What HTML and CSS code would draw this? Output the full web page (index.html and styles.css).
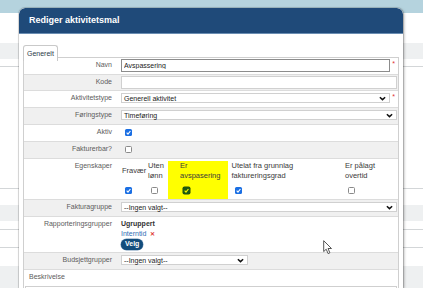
FILE: index.html
```html
<!DOCTYPE html>
<html lang="no">
<head>
    <meta charset="UTF-8">
    <meta name="viewport" content="width=device-width, initial-scale=1.0">
    <title>Rediger aktivitetsmal</title>
    <link rel="stylesheet" href="styles.css">
</head>
<body>

    <!-- page behind the modal -->
    <div class="page">
        <div class="topbar"></div>
        <div class="bg-row h30"></div>
        <div class="bg-row gray h16"></div>
        <div class="bg-row line h8"></div>
        <div class="bg-row line h122"></div>
        <div class="bg-row h16"></div>
        <div class="bg-row gray h16"></div>
        <div class="bg-row line h9"></div>
        <div class="bg-row line h18"></div>
        <div class="bg-row h18"></div>
        <div class="bg-row gray h22"></div>
    </div>

    <div class="modal">
        <div class="modal-title">Rediger aktivitetsmal</div>
        <div class="modal-body">
            <div class="tabs"><span class="tab">Generelt</span></div>

            <div class="form">
                <div class="row">
                    <label>Navn</label>
                    <div class="field">
                        <input class="text focus" type="text" value="Avspassering">
                        <span class="req">*</span>
                    </div>
                </div>

                <div class="row gray short">
                    <label>Kode</label>
                    <div class="field"><input class="text" type="text" value=""></div>
                </div>

                <div class="row">
                    <label>Aktivitetstype</label>
                    <div class="field">
                        <div class="select grow">
                            <span>Generell aktivitet</span>
                            <svg viewBox="0 0 8 5"><path d="M1 1l3 2.8L7 1"/></svg>
                        </div>
                        <span class="req">*</span>
                    </div>
                </div>

                <div class="row gray">
                    <label>Føringstype</label>
                    <div class="field">
                        <div class="select grow">
                            <span>Timeføring</span>
                            <svg viewBox="0 0 8 5"><path d="M1 1l3 2.8L7 1"/></svg>
                        </div>
                    </div>
                </div>

                <div class="row">
                    <label>Aktiv</label>
                    <div class="field">
                        <span class="cb on"><svg viewBox="0 0 8 8"><path d="M1.9 4.2l1.5 1.6 2.8-3.5"/></svg></span>
                    </div>
                </div>

                <div class="row gray">
                    <label>Fakturerbar?</label>
                    <div class="field"><span class="cb"></span></div>
                </div>

                <div class="row tall">
                    <label>Egenskaper</label>
                    <div class="field">
                        <div class="props">
                            <div class="prop-head single">Fravær</div>
                            <div class="prop-head">Uten<br>lønn</div>
                            <div class="prop-head hl">Er<br>avspasering</div>
                            <div class="prop-head">Utelat fra grunnlag<br>faktureringsgrad</div>
                            <div class="prop-head">Er pålagt<br>overtid</div>

                            <div class="prop-cell"><span class="cb on"><svg viewBox="0 0 8 8"><path d="M1.9 4.2l1.5 1.6 2.8-3.5"/></svg></span></div>
                            <div class="prop-cell"><span class="cb"></span></div>
                            <div class="prop-cell hl"><span class="cb on marked"><svg viewBox="0 0 8 8"><path d="M1.9 4.2l1.5 1.6 2.8-3.5"/></svg></span></div>
                            <div class="prop-cell"><span class="cb on"><svg viewBox="0 0 8 8"><path d="M1.9 4.2l1.5 1.6 2.8-3.5"/></svg></span></div>
                            <div class="prop-cell"><span class="cb"></span></div>
                        </div>
                    </div>
                </div>

                <div class="row gray">
                    <label>Fakturagruppe</label>
                    <div class="field">
                        <div class="select grow">
                            <span>--Ingen valgt--</span>
                            <svg viewBox="0 0 8 5"><path d="M1 1l3 2.8L7 1"/></svg>
                        </div>
                    </div>
                </div>

                <div class="row groups">
                    <label>Rapporteringsgrupper</label>
                    <div class="field block">
                        <div class="group-name">Ugruppert</div>
                        <div class="group-item"><a href="#">Interntid</a><span class="remove">✕</span></div>
                        <button class="btn-velg">Velg</button>
                    </div>
                </div>

                <div class="row gray">
                    <label>Budsjettgrupper</label>
                    <div class="field">
                        <div class="select small">
                            <span>--Ingen valgt--</span>
                            <svg viewBox="0 0 8 5"><path d="M1 1l3 2.8L7 1"/></svg>
                        </div>
                    </div>
                </div>

                <div class="row-full">
                    <div class="full-label">Beskrivelse</div>
                    <div class="textarea"></div>
                </div>
            </div>
        </div>
    </div>

    <svg class="cursor" viewBox="0 0 10 15">
        <path d="M0.7 0.7V11.6L3.2 9.2L5.1 13.6L6.9 12.8L5 8.5H8.5Z"/>
    </svg>

</body>
</html>
```

FILE: styles.css
```css
* {
    box-sizing: border-box;
}
body {
    margin: 0;
    width: 423px;
    height: 288px;
    overflow: hidden;
    position: relative;
    font-family: "Liberation Sans", Arial, sans-serif;
    background-color: #fff;
}

/* background page */
.topbar {
    height: 13px;
    background-color: #b5d3de;
}
.bg-row.gray {
    background-color: #eef0f1;
}
.bg-row.line {
    border-bottom: 1px solid #d3d6d8;
}
.h8 { height: 8px; }
.h9 { height: 9px; }
.h16 { height: 16px; }
.h18 { height: 18px; }
.h22 { height: 22px; }
.h30 { height: 30px; }
.h122 { height: 122px; }

/* modal */
.modal {
    position: absolute;
    left: 19px;
    top: 8px;
    width: 384px;
    height: 280px;
    overflow: hidden;
    background-color: #fff;
    border-radius: 6px 6px 0 0;
    box-shadow: 0 0 0 1px rgba(0, 0, 0, 0.12), 1px 1px 3px rgba(0, 0, 0, 0.35);
}
.modal-title {
    height: 26px;
    line-height: 25px;
    padding-left: 10px;
    background-color: #1f4a79;
    border-bottom: 1px solid #6a8db2;
    border-radius: 6px 6px 0 0;
    color: #fff;
    font-size: 9px;
    font-weight: bold;
}
.modal-body {
    padding: 8px 4px 0 4px;
}
.tabs {
    height: 15px;
}
.tab {
    display: inline-block;
    position: relative;
    height: 16px;
    padding: 0 3px;
    line-height: 15px;
    font-size: 7px;
    color: #2b3a4a;
    background-color: #fff;
    border: 1px solid #c9c9c9;
    border-bottom: none;
    border-radius: 3px 3px 0 0;
    z-index: 1;
}
.form {
    border: 1px solid #cfcfcf;
    border-bottom: none;
}

/* rows */
.row {
    display: grid;
    grid-template-columns: 97px 1fr;
    height: 17px;
    border-bottom: 1px solid #dcdcdc;
    background-color: #fff;
}
.row.gray {
    background-color: #f0f0f0;
}
.row.short {
    height: 16px;
}
.row.tall {
    height: 41px;
}
.row.groups {
    height: 36px;
}
.row label {
    padding: 2px 9px 0 0;
    font-size: 7px;
    line-height: 10px;
    color: #5c5c5c;
    text-align: right;
    white-space: nowrap;
}
.field {
    display: flex;
    align-items: flex-start;
    padding: 2px 1px 0 0;
    min-width: 0;
}
.field.block {
    display: block;
}

input.text {
    width: 100%;
    height: 13px;
    margin: -1px 0 0 0;
    padding: 0 2px;
    border: 1px solid #d0d0d0;
    font-family: inherit;
    font-size: 7px;
    color: #222;
    background-color: #fff;
    outline: none;
}
input.text.focus {
    flex: 1;
    border-color: #8c8c8c;
}
.req {
    width: 7px;
    flex: none;
    text-align: center;
    font-size: 7px;
    line-height: 8px;
    color: #e03030;
}

.select {
    display: flex;
    align-items: center;
    justify-content: space-between;
    height: 10px;
    padding: 0 3px 0 2px;
    border: 1px solid #d0d0d0;
    background-color: #fff;
    font-size: 7px;
    color: #222;
    white-space: nowrap;
}
.select.grow {
    flex: 1;
}
.select.small {
    width: 127px;
}
.select svg {
    width: 7px;
    height: 5px;
    fill: none;
    stroke: #111;
    stroke-width: 1.7;
}

/* checkboxes */
.cb {
    display: inline-block;
    width: 7px;
    height: 7px;
    margin: 1.5px 0 0 4px;
    border: 1px solid #8a8a8a;
    border-radius: 1.5px;
    background-color: #fff;
}
.cb.on {
    border: none;
    background-color: #1b6fe3;
}
.cb svg {
    display: block;
    width: 7px;
    height: 7px;
    fill: none;
    stroke: #fff;
    stroke-width: 1.3;
}
.cb.marked {
    background-color: #1d5a10;
    box-shadow: 0 0 0 0.5px #234a08;
}
.cb.marked svg {
    stroke: #ffff00;
}

/* egenskaper */
.props {
    display: grid;
    grid-template-columns: 26px 21px 60px 116px 1fr;
    grid-template-rows: 20px 18px;
    width: 100%;
}
.prop-head {
    display: flex;
    align-items: center;
    padding-left: 1px;
    font-size: 7.5px;
    line-height: 10px;
    color: #3a3a3a;
    white-space: nowrap;
}
.prop-cell {
    display: flex;
    align-items: center;
    padding-left: 1px;
}
.prop-cell .cb {
    margin: 0 0 0 3px;
}
.props .hl {
    padding-left: 12px;
    background-color: #ffff00;
}
.props > :nth-child(4),
.props > :nth-child(9) {
    padding-left: 3.5px;
}

/* rapporteringsgrupper */
.group-name {
    font-size: 7px;
    line-height: 10px;
    font-weight: bold;
    color: #333;
}
.group-item {
    font-size: 7px;
    line-height: 10px;
}
.group-item a {
    color: #2f6db3;
    text-decoration: none;
}
.remove {
    margin-left: 4px;
    color: #e0392f;
    font-weight: bold;
    font-size: 6px;
}
.btn-velg {
    display: block;
    height: 10.5px;
    margin: 0;
    padding: 0 4px;
    border: none;
    border-radius: 6px;
    background-color: #124c7c;
    box-shadow: 0 0 0 0.5px #6f93b5;
    color: #fff;
    font-family: inherit;
    font-size: 7px;
    font-weight: bold;
    line-height: 10.5px;
}

/* beskrivelse */
.row-full {
    height: 18px;
}
.full-label {
    padding: 2px 0 0 5px;
    font-size: 7px;
    line-height: 10px;
    color: #5c5c5c;
}
.textarea {
    height: 2px;
    margin: 4px 1px 0 1px;
    border: 1px solid #cfcfcf;
    border-bottom: none;
}

/* mouse pointer in the shot */
.cursor {
    position: absolute;
    left: 323px;
    top: 240px;
    width: 10px;
    height: 15px;
    fill: #fff;
    stroke: #444;
    stroke-width: 0.9;
    stroke-linejoin: round;
}
```
